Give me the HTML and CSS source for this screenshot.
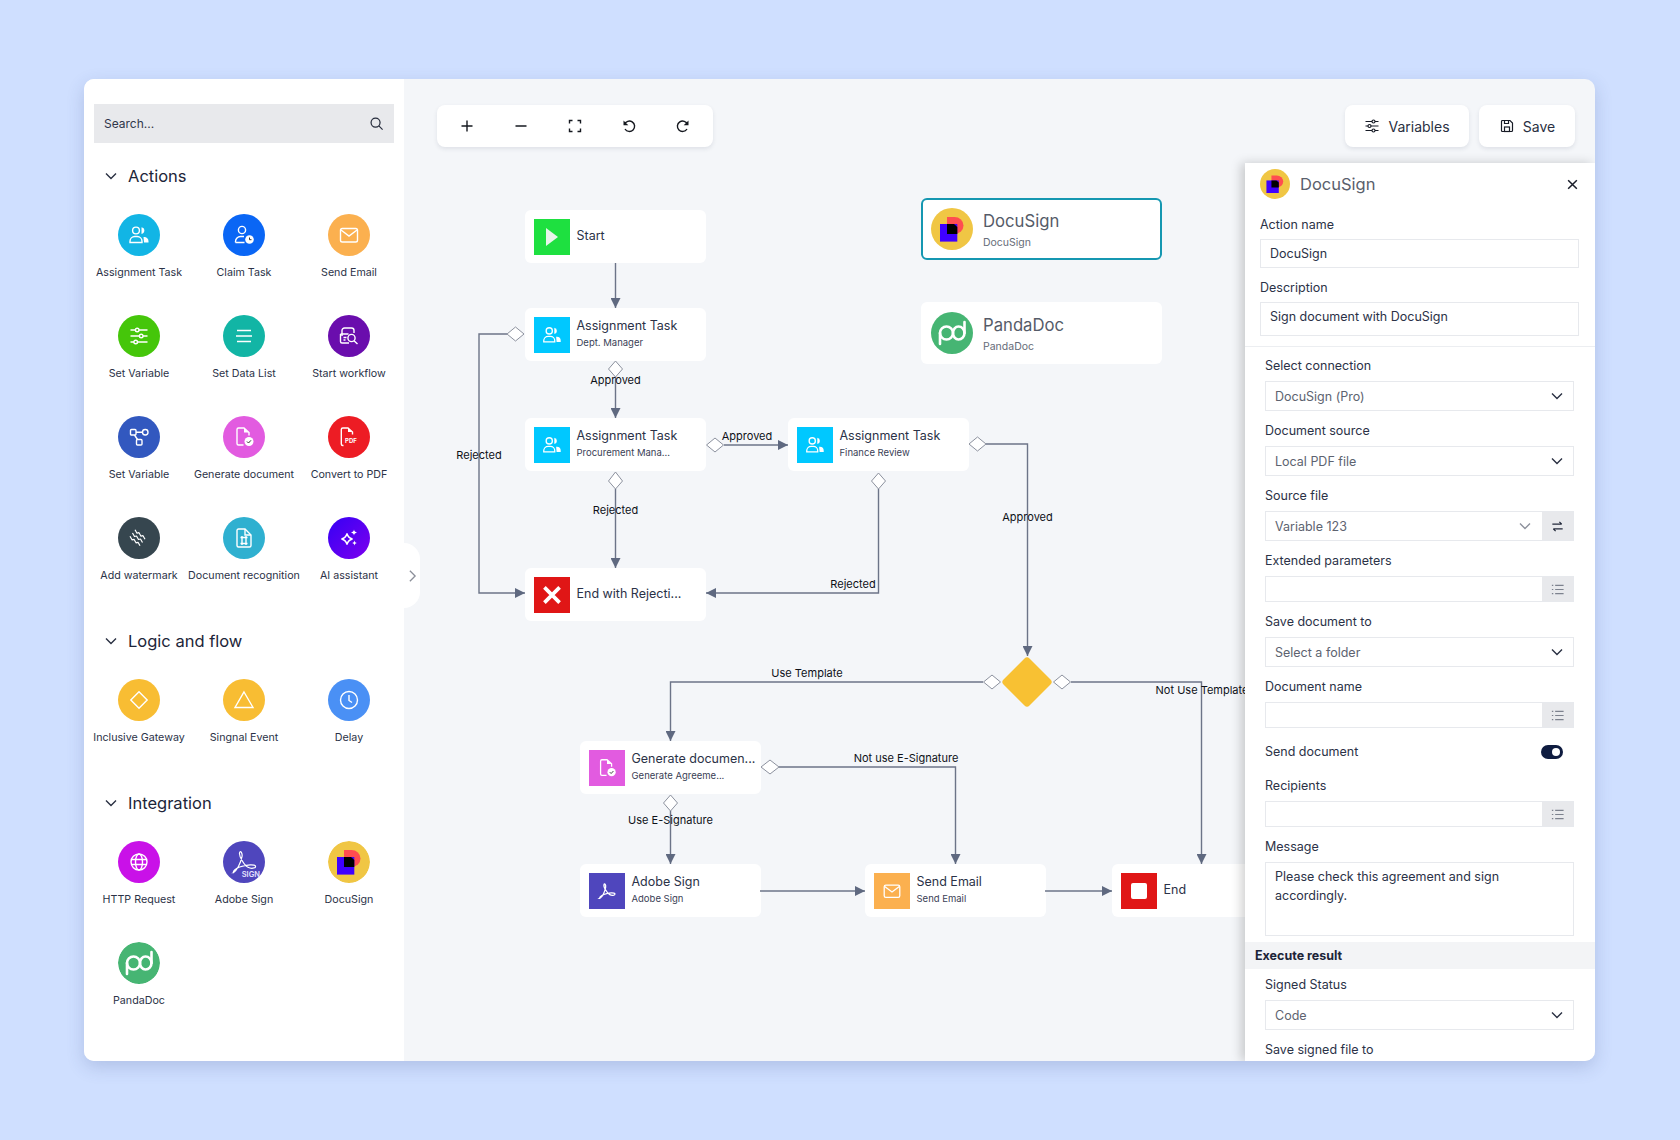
FILE: index.html
```html
<!DOCTYPE html>
<html lang="en">
<head>
    <meta charset="UTF-8">
    <title>Workflow Designer</title>
    <link rel="stylesheet" href="styles.css">
</head>
<body>
    <svg class="sprites" width="0" height="0">
        <symbol id="i-assign" viewBox="0 0 24 24">
            <circle cx="9" cy="7.5" r="3.4"/>
            <path d="M3 19.5v-1.2A4.8 4.8 0 0 1 7.8 13.5h2.4A4.8 4.8 0 0 1 15 18.3v1.2z"/>
            <path class="solid" d="M14.5 4.2a3.4 3.4 0 0 1 0 6.7z"/>
            <path class="solid" d="M16.5 14h.8a4.2 4.2 0 0 1 4.2 4.2v1.3h-4.5z"/>
        </symbol>
        <symbol id="i-claim" viewBox="0 0 24 24">
            <circle cx="10" cy="7" r="3.6"/>
            <path d="M3.5 19.5v-1A5 5 0 0 1 8.5 13.5H12M3.5 19.5h9"/>
            <circle class="solid" cx="17.5" cy="16.5" r="4.3"/>
            <path class="hand" d="M17.5 14.5v2.2h2"/>
        </symbol>
        <symbol id="i-mail" viewBox="0 0 24 24">
            <rect x="3.5" y="5.5" width="17" height="13.5" rx="1.8"/>
            <path d="M4 7l8 6 8-6"/>
        </symbol>
        <symbol id="i-sliders" viewBox="0 0 24 24">
            <path d="M3.5 6h5M12 6h8.5M3.5 12h9M16 12h4.5M3.5 18H7M10.5 18h10"/>
            <circle cx="10.2" cy="6" r="1.8"/>
            <circle cx="14.2" cy="12" r="1.8"/>
            <circle cx="8.7" cy="18" r="1.8"/>
        </symbol>
        <symbol id="i-list" viewBox="0 0 24 24">
            <path d="M5 6.5h14M4 12h16M5 17.5h14"/>
        </symbol>
        <symbol id="i-start" viewBox="0 0 24 24">
            <path d="M5 12V6.5A2.5 2.5 0 0 1 7.5 4h7A2.5 2.5 0 0 1 17 6.5V9"/>
            <path d="M3.5 10h8M3.5 10v7.5A1.5 1.5 0 0 0 5 19h7"/>
            <circle cx="14.5" cy="14" r="3.6"/>
            <path d="M17 16.7l3.5 3.3M6.5 13.5h3M6.5 16h2"/>
        </symbol>
        <symbol id="i-flow" viewBox="0 0 24 24">
            <rect x="3.5" y="4.5" width="5.5" height="5.5" rx="1"/>
            <rect x="15.5" y="4.5" width="5.5" height="5.5" rx="2.7"/>
            <rect x="9.5" y="14.5" width="5.5" height="5.5" rx="1"/>
            <path d="M9 7.2h6.5M7.5 10l3 4.5"/>
        </symbol>
        <symbol id="i-doc-check" viewBox="0 0 24 24">
            <path d="M11.5 20h-5A1.5 1.5 0 0 1 5 18.5v-14A1.5 1.5 0 0 1 6.5 3H12l5 4.5v3"/>
            <path class="solid" d="M12 3v4.5h5z"/>
            <circle class="solid" cx="17" cy="16.5" r="4.5"/>
            <path class="hand" d="M15 16.5l1.5 1.5 2.5-2.7"/>
        </symbol>
        <symbol id="i-pdf" viewBox="0 0 24 24">
            <path d="M6.5 20.5h-.7a1.5 1.5 0 0 1-1.5-1.500V4.500A1.500 1.500 0 0 1 5.800 3H11l4.500 4v2.500"/>
            <path class="solid" d="M11 3v4h4.500z"/>
        </symbol>
        <symbol id="i-watermark" viewBox="0 0 24 24">
            <path d="M8 3.700l2 3.500 2-.5 2 3.500 2-.5 2 3.500"/>
            <path d="M5.500 7l2 3.500 2-.5 2 3.500 2-.5 2 3.500"/>
            <path d="M3 10.300l2 3.500 2-.5 2 3.500 2-.5 2 3.500"/>
        </symbol>
        <symbol id="i-recognize" viewBox="0 0 24 24">
            <path d="M13 3H6.500A1.500 1.500 0 0 0 5 4.500v15A1.500 1.500 0 0 0 6.500 21h11a1.500 1.500 0 0 0 1.500-1.500V9z"/>
            <path d="M13 3v6h6"/>
            <path d="M8.500 11.500h7M8.500 17.500h7M10 10v9M14 10v9"/>
        </symbol>
        <symbol id="i-spark" viewBox="0 0 24 24">
            <path d="M10 7.500c.7 3 2.500 4.800 5.500 5.500-3 .7-4.800 2.500-5.500 5.500-.7-3-2.500-4.800-5.500-5.500 3-.7 4.800-2.500 5.500-5.500z"/>
            <path class="solid" d="M17 3.500c.3 1.700 1.200 2.600 3 3-1.800.4-2.700 1.300-3 3-.3-1.700-1.200-2.600-3-3 1.800-.4 2.700-1.300 3-3z"/>
            <path class="solid" d="M17.500 14.500c.3 1.500 1 2.200 2.500 2.500-1.500.3-2.200 1-2.500 2.500-.3-1.500-1-2.200-2.500-2.500 1.500-.3 2.200-1 2.500-2.500z"/>
        </symbol>
        <symbol id="i-gateway" viewBox="0 0 24 24">
            <path d="M12 3.800l8.200 8.200-8.200 8.200L3.800 12z"/>
        </symbol>
        <symbol id="i-signal" viewBox="0 0 24 24">
            <path d="M12 4l9 15.500H3z"/>
        </symbol>
        <symbol id="i-clock" viewBox="0 0 24 24">
            <circle cx="12" cy="12" r="8.5"/>
            <path d="M12 7v5.500l3 2"/>
        </symbol>
        <symbol id="i-globe" viewBox="0 0 24 24">
            <circle cx="12" cy="12" r="8"/>
            <ellipse cx="12" cy="12" rx="3.5" ry="8"/>
            <path d="M4.500 9.500h15M4.500 14.500h15"/>
        </symbol>
        <symbol id="i-adobe" viewBox="0 0 24 24">
            <path d="M4 20c2.500-1.500 5.500-7 6.500-12 .5-2.700-1.200-5-1.800-3-.7 2.500 3.500 9.500 6.300 11 2.300 1.200 5.700.8 5.700-.7 0-1.800-7-1.500-12 .5-3.500 1.400-5.500 3.500-4.200 4.200z"/>
        </symbol>
        <symbol id="l-docusign" viewBox="0 0 42 42">
            <circle class="logo-bg-yellow" cx="21" cy="21" r="21"/>
            <path class="logo-red" d="M16 9h7.500a9 8.500 0 0 1 0 17H16z"/>
            <rect class="logo-blue" x="9" y="16" width="17.3" height="17.6"/>
            <path class="logo-black" d="M16 16h7l3.300 3v7H16z"/>
        </symbol>
        <symbol id="l-pandadoc" viewBox="0 0 42 42">
            <circle class="logo-bg-green" cx="21" cy="21" r="21"/>
            <path class="logo-pd" d="M9 32V21a6.500 6.500 0 0 1 13 0a5.500 6.500 0 0 0 5.500 6.500a6 6.500 0 0 0 6-6.500V10"/>
            <path class="logo-pd" d="M33.500 21a6 6.500 0 0 0-6-6.500a5.500 6.500 0 0 0-5.500 6.500a6.500 6.500 0 0 1-6.500 6.500a6.500 6.500 0 0 1-6.500-6.500"/>
        </symbol>
        <symbol id="i-chevron" viewBox="0 0 14 14">
            <path d="M2 4.500l5 5 5-5"/>
        </symbol>
    </svg>

    <div class="app">
        <aside class="sidebar">
            <div class="search">
                <span>Search...</span>
                <svg class="search-icon" viewBox="0 0 16 16"><circle cx="7" cy="7" r="4.8"/><path d="M10.500 10.500l4 4"/></svg>
            </div>

            <section class="group">
                <div class="group-head"><svg class="chev"><use href="#i-chevron"/></svg>Actions</div>
                <div class="tiles">
                    <div class="tile"><div class="disc c-assign"><svg class="glyph"><use href="#i-assign"/></svg></div><span>Assignment Task</span></div>
                    <div class="tile"><div class="disc c-claim"><svg class="glyph"><use href="#i-claim"/></svg></div><span>Claim Task</span></div>
                    <div class="tile"><div class="disc c-mail"><svg class="glyph"><use href="#i-mail"/></svg></div><span>Send Email</span></div>
                    <div class="tile"><div class="disc c-var"><svg class="glyph"><use href="#i-sliders"/></svg></div><span>Set Variable</span></div>
                    <div class="tile"><div class="disc c-list"><svg class="glyph"><use href="#i-list"/></svg></div><span>Set Data List</span></div>
                    <div class="tile"><div class="disc c-start"><svg class="glyph"><use href="#i-start"/></svg></div><span>Start workflow</span></div>
                    <div class="tile"><div class="disc c-flow"><svg class="glyph"><use href="#i-flow"/></svg></div><span>Set Variable</span></div>
                    <div class="tile"><div class="disc c-gen"><svg class="glyph"><use href="#i-doc-check"/></svg></div><span>Generate document</span></div>
                    <div class="tile">
                        <div class="disc c-pdf">
                            <svg class="glyph" viewBox="0 0 24 24"><use href="#i-pdf"/><text class="pdf-text" x="8" y="18">PDF</text></svg>
                        </div>
                        <span>Convert to PDF</span>
                    </div>
                    <div class="tile"><div class="disc c-water"><svg class="glyph glyph-thin"><use href="#i-watermark"/></svg></div><span>Add watermark</span></div>
                    <div class="tile"><div class="disc c-rec"><svg class="glyph"><use href="#i-recognize"/></svg></div><span>Document recognition</span></div>
                    <div class="tile"><div class="disc c-ai"><svg class="glyph"><use href="#i-spark"/></svg></div><span>AI assistant</span></div>
                </div>
            </section>

            <section class="group">
                <div class="group-head"><svg class="chev"><use href="#i-chevron"/></svg>Logic and flow</div>
                <div class="tiles">
                    <div class="tile"><div class="disc c-gold"><svg class="glyph"><use href="#i-gateway"/></svg></div><span>Inclusive Gateway</span></div>
                    <div class="tile"><div class="disc c-gold"><svg class="glyph"><use href="#i-signal"/></svg></div><span>Singnal Event</span></div>
                    <div class="tile"><div class="disc c-delay"><svg class="glyph"><use href="#i-clock"/></svg></div><span>Delay</span></div>
                </div>
            </section>

            <section class="group">
                <div class="group-head"><svg class="chev"><use href="#i-chevron"/></svg>Integration</div>
                <div class="tiles">
                    <div class="tile"><div class="disc c-http"><svg class="glyph"><use href="#i-globe"/></svg></div><span>HTTP Request</span></div>
                    <div class="tile">
                        <div class="disc c-adobe">
                            <svg class="glyph glyph-lg"><use href="#i-adobe"/></svg>
                            <span class="sign-mark">SIGN</span>
                        </div>
                        <span>Adobe Sign</span>
                    </div>
                    <div class="tile"><div class="disc"><svg class="logo"><use href="#l-docusign"/></svg></div><span>DocuSign</span></div>
                    <div class="tile"><div class="disc"><svg class="logo"><use href="#l-pandadoc"/></svg></div><span>PandaDoc</span></div>
                </div>
            </section>
        </aside>

        <main class="canvas">
            <button class="collapse"><svg viewBox="0 0 10 16"><path d="M2 2l6 6-6 6"/></svg></button>

            <svg class="edges" viewBox="404 79 1191 982">
                <defs>
                    <marker id="arrow" viewBox="0 0 10 10" refX="10" refY="5" markerWidth="10" markerHeight="10" markerUnits="userSpaceOnUse" orient="auto">
                        <path d="M0 0L10 5L0 10z"/>
                    </marker>
                </defs>
                <g class="wires">
                    <path d="M615.5 263V308" marker-end="url(#arrow)"/>
                    <path d="M507 334H479V593H525" marker-end="url(#arrow)"/>
                    <path d="M615.5 377V418" marker-end="url(#arrow)"/>
                    <path d="M724 445H788" marker-end="url(#arrow)"/>
                    <path d="M615.5 489V568" marker-end="url(#arrow)"/>
                    <path d="M878.5 489V593H706" marker-end="url(#arrow)"/>
                    <path d="M986 444H1027.5V656" marker-end="url(#arrow)"/>
                    <path d="M983 682H670.5V741" marker-end="url(#arrow)"/>
                    <path d="M1071 682H1201.5V864" marker-end="url(#arrow)"/>
                    <path d="M779 767H955.5V864" marker-end="url(#arrow)"/>
                    <path d="M670.5 811V864" marker-end="url(#arrow)"/>
                    <path d="M760 891H865" marker-end="url(#arrow)"/>
                    <path d="M1045 891H1112" marker-end="url(#arrow)"/>
                </g>
                <g class="ports">
                    <polygon points="507,334 515.5,327 524,334 515.5,341"/>
                    <polygon points="615.5,361 622.5,369 615.5,377 608.5,369"/>
                    <polygon points="706.5,445 715,438 723.5,445 715,452"/>
                    <polygon points="615.5,472 622.5,481 615.5,489 608.5,481"/>
                    <polygon points="878.5,473 885.5,481 878.5,489 871.5,481"/>
                    <polygon points="969,444 977.5,437 986,444 977.5,451"/>
                    <polygon points="983.5,682 992,675 1000.5,682 992,689"/>
                    <polygon points="1053.5,682 1062,675 1070.5,682 1062,689"/>
                    <polygon points="761,767 770,760 779,767 770,774"/>
                    <polygon points="670.5,795 677.5,803 670.5,811 663.5,803"/>
                </g>
                <path class="gateway" d="M1024.5 658.5a3.5 3.5 0 0 1 5 0l21 21a3.5 3.5 0 0 1 0 5l-21 21a3.5 3.5 0 0 1-5 0l-21-21a3.5 3.5 0 0 1 0-5z"/>
                <g class="edge-labels">
                    <text x="615.5" y="384">Approved</text>
                    <text x="747" y="440">Approved</text>
                    <text x="479" y="459">Rejected</text>
                    <text x="615.5" y="514">Rejected</text>
                    <text x="853" y="588">Rejected</text>
                    <text x="1027.5" y="521">Approved</text>
                    <text x="807" y="677">Use Template</text>
                    <text x="1202" y="694">Not Use Template</text>
                    <text x="906" y="762">Not use E-Signature</text>
                    <text x="670.5" y="824">Use E-Signature</text>
                </g>
            </svg>

            <div class="node n-start">
                <div class="node-icon c-node-start"><div class="play"></div></div>
                <div class="node-text"><div class="node-title">Start</div></div>
            </div>
            <div class="node n-dept">
                <div class="node-icon c-node-assign"><svg class="node-glyph"><use href="#i-assign"/></svg></div>
                <div class="node-text"><div class="node-title">Assignment Task</div><div class="node-sub">Dept. Manager</div></div>
            </div>
            <div class="node n-proc">
                <div class="node-icon c-node-assign"><svg class="node-glyph"><use href="#i-assign"/></svg></div>
                <div class="node-text"><div class="node-title">Assignment Task</div><div class="node-sub">Procurement Mana...</div></div>
            </div>
            <div class="node n-fin">
                <div class="node-icon c-node-assign"><svg class="node-glyph"><use href="#i-assign"/></svg></div>
                <div class="node-text"><div class="node-title">Assignment Task</div><div class="node-sub">Finance Review</div></div>
            </div>
            <div class="node n-reject">
                <div class="node-icon c-node-end">
                    <svg class="node-glyph node-glyph-x" viewBox="0 0 24 24"><path d="M5 5l14 14M19 5L5 19"/></svg>
                </div>
                <div class="node-text"><div class="node-title">End with Rejecti...</div></div>
            </div>
            <div class="node n-gen">
                <div class="node-icon c-gen"><svg class="node-glyph"><use href="#i-doc-check"/></svg></div>
                <div class="node-text"><div class="node-title">Generate documen...</div><div class="node-sub">Generate Agreeme...</div></div>
            </div>
            <div class="node n-adobe">
                <div class="node-icon c-adobe"><svg class="node-glyph"><use href="#i-adobe"/></svg></div>
                <div class="node-text"><div class="node-title">Adobe Sign</div><div class="node-sub">Adobe Sign</div></div>
            </div>
            <div class="node n-send">
                <div class="node-icon c-mail"><svg class="node-glyph"><use href="#i-mail"/></svg></div>
                <div class="node-text"><div class="node-title">Send Email</div><div class="node-sub">Send Email</div></div>
            </div>
            <div class="node n-end">
                <div class="node-icon c-node-end"><div class="stop"></div></div>
                <div class="node-text"><div class="node-title">End</div></div>
            </div>
            <div class="node node-wide n-docu">
                <svg class="node-logo"><use href="#l-docusign"/></svg>
                <div class="node-text"><div class="node-title">DocuSign</div><div class="node-sub">DocuSign</div></div>
            </div>
            <div class="node node-wide n-panda">
                <svg class="node-logo"><use href="#l-pandadoc"/></svg>
                <div class="node-text"><div class="node-title">PandaDoc</div><div class="node-sub">PandaDoc</div></div>
            </div>

            <div class="toolbar">
                <button><svg viewBox="0 0 16 16"><path d="M8 2.5v11M2.5 8h11"/></svg></button>
                <button><svg viewBox="0 0 16 16"><path d="M2.5 8h11"/></svg></button>
                <button><svg viewBox="0 0 16 16"><path d="M5.5 2.5h-3v3M10.5 2.5h3v3M5.5 13.5h-3v-3M10.5 13.5h3v-3"/></svg></button>
                <button><svg viewBox="0 0 16 16"><path d="M3.5 6.5A5.2 5.2 0 1 1 4 11"/><path class="solid" d="M2.5 2.5v4.8h4.8z"/></svg></button>
                <button><svg viewBox="0 0 16 16"><path d="M12.5 6.5A5.2 5.2 0 1 0 12 11"/><path class="solid" d="M13.5 2.5v4.8H8.7z"/></svg></button>
            </div>
            <div class="actions">
                <button class="action action-vars">
                    <svg viewBox="0 0 16 16"><path d="M1.5 3.5H8M11 3.5h3.5M1.5 8H4M7 8h7.5M1.5 12.5H8M11 12.5h3.5"/><circle cx="9.5" cy="3.5" r="1.5"/><circle cx="5.5" cy="8" r="1.5"/><circle cx="9.5" cy="12.5" r="1.5"/></svg>
                    Variables
                </button>
                <button class="action">
                    <svg viewBox="0 0 16 16"><path d="M2.5 3.5a1 1 0 0 1 1-1H11l2.5 2.5v7.5a1 1 0 0 1-1 1h-9a1 1 0 0 1-1-1z"/><path d="M5.5 2.5v3h4v-3"/><rect x="5.5" y="9" width="5" height="4.5"/></svg>
                    Save
                </button>
            </div>

            <div class="panel">
                <div class="panel-head">
                    <svg class="panel-logo"><use href="#l-docusign"/></svg>
                    <div class="panel-title">DocuSign</div>
                    <svg class="panel-close" viewBox="0 0 12 12"><path d="M2 2l8 8M10 2l-8 8"/></svg>
                </div>
                <div class="panel-top">
                    <label class="field-label">Action name</label>
                    <div class="box box-name">DocuSign</div>
                    <label class="field-label">Description</label>
                    <div class="box box-desc">Sign document with DocuSign</div>
                </div>
                <div class="panel-form">
                    <label class="field-label">Select connection</label>
                    <div class="box box-select">DocuSign (Pro)<svg class="chev"><use href="#i-chevron"/></svg></div>
                    <label class="field-label">Document source</label>
                    <div class="box box-select">Local PDF file<svg class="chev"><use href="#i-chevron"/></svg></div>
                    <label class="field-label">Source file</label>
                    <div class="box box-select box-addon">
                        <span class="addon-main">Variable 123<svg class="chev chev-soft"><use href="#i-chevron"/></svg></span>
                        <span class="addon-btn"><svg viewBox="0 0 16 16"><path d="M2.5 5.5h10M10 3l2.5 2.5M13.5 10.500h-10M6 13l-2.5-2.5"/></svg></span>
                    </div>
                    <label class="field-label">Extended parameters</label>
                    <div class="box box-input box-addon"><span class="addon-main"></span><span class="addon-btn addon-list"><svg viewBox="0 0 16 16"><path d="M5.5 3.5h9M5.5 8h9M5.5 12.5h9M2 3.5h1.5M2 8h1.5M2 12.5h1.5"/></svg></span></div>
                    <label class="field-label">Save document to</label>
                    <div class="box box-select">Select a folder<svg class="chev"><use href="#i-chevron"/></svg></div>
                    <label class="field-label">Document name</label>
                    <div class="box box-input box-addon"><span class="addon-main"></span><span class="addon-btn addon-list"><svg viewBox="0 0 16 16"><path d="M5.5 3.5h9M5.5 8h9M5.5 12.5h9M2 3.5h1.5M2 8h1.5M2 12.5h1.5"/></svg></span></div>
                    <div class="toggle-row">
                        <span class="field-label">Send document</span>
                        <span class="toggle"></span>
                    </div>
                    <label class="field-label">Recipients</label>
                    <div class="box box-input box-addon"><span class="addon-main"></span><span class="addon-btn addon-list"><svg viewBox="0 0 16 16"><path d="M5.5 3.5h9M5.5 8h9M5.5 12.5h9M2 3.5h1.5M2 8h1.5M2 12.5h1.5"/></svg></span></div>
                    <label class="field-label">Message</label>
                    <div class="box box-message">Please check this agreement and sign accordingly.</div>
                </div>
                <div class="panel-band">Execute result</div>
                <div class="panel-form panel-form-tail">
                    <label class="field-label">Signed Status</label>
                    <div class="box box-select">Code<svg class="chev"><use href="#i-chevron"/></svg></div>
                    <label class="field-label">Save signed file to</label>
                </div>
            </div>
        </main>
    </div>
</body>
</html>
```

FILE: styles.css
```css
* {
    margin: 0;
    padding: 0;
    box-sizing: border-box;
    font-family: Inter, "Open Sans", sans-serif;
}

body {
    height: 1140px;
    background: #cfdfff;
    padding: 79px 85px 0 84px;
    overflow: hidden;
}

.sprites {
    position: absolute;
}

.solid {
    fill: currentColor;
    stroke: none;
}

button {
    border: none;
    background: none;
}

.app {
    display: flex;
    height: 982px;
    background: #f4f6f9;
    border-radius: 10px;
    overflow: hidden;
    box-shadow: 0 6px 18px rgba(50, 70, 130, 0.2);
}

/* sidebar */

.sidebar {
    width: 320px;
    flex-shrink: 0;
    background: #fff;
    padding-top: 25px;
}

.search {
    display: flex;
    align-items: center;
    justify-content: space-between;
    height: 39px;
    margin: 0 10px 21px;
    padding: 0 10px;
    background: #e8e9ec;
    font-size: 12px;
    color: #2f364a;
}

.search-icon {
    width: 15px;
    height: 15px;
    fill: none;
    stroke: #252b3b;
    stroke-width: 1.3;
}

.group {
    margin-bottom: 45px;
}

.group-head {
    display: flex;
    align-items: center;
    gap: 10px;
    height: 24px;
    padding-left: 20px;
    margin-bottom: 26px;
    font-size: 16.5px;
    color: #1d2539;
}

.chev {
    width: 14px;
    height: 14px;
    fill: none;
    stroke: #2a3042;
    stroke-width: 1.4;
    flex-shrink: 0;
}

.tiles {
    display: grid;
    grid-template-columns: repeat(3, 105px);
    row-gap: 34px;
    padding: 0 2.5px;
}

.tile {
    display: flex;
    flex-direction: column;
    align-items: center;
    gap: 9px;
    font-size: 10.7px;
    line-height: 16px;
    color: #2b3247;
    white-space: nowrap;
}

.disc {
    position: relative;
    width: 42px;
    height: 42px;
    border-radius: 50%;
    display: flex;
    align-items: center;
    justify-content: center;
    overflow: hidden;
}

.glyph {
    width: 24px;
    height: 24px;
    fill: none;
    stroke: #fff;
    stroke-width: 1.4;
    color: #fff;
}

.glyph-thin {
    stroke-width: 1.2;
    stroke-linejoin: round;
}

.glyph-lg {
    width: 32px;
    height: 32px;
    stroke-width: 0.9;
}

.hand {
    stroke: #333;
    stroke-width: 1;
    fill: none;
}

.pdf-text {
    font-size: 6px;
    font-weight: 700;
    fill: #fff;
    stroke: none;
}

.sign-mark {
    position: absolute;
    right: 5px;
    bottom: 4px;
    font-size: 7.5px;
    line-height: 8px;
    font-weight: 600;
    color: #e5e3ff;
}

.logo {
    width: 42px;
    height: 42px;
}

.logo-bg-yellow { fill: #f0c644; }
.logo-bg-green { fill: #46b573; }
.logo-red { fill: #ff4d50; }
.logo-blue { fill: #3f00ff; }
.logo-black { fill: #000; }
.logo-pd { fill: none; stroke: #fff; stroke-width: 2.6; stroke-linecap: round; }

.c-assign { background: #12b5e5; }
.c-claim { background: #0a66f5; }
.c-mail { background: #fbb04f; }
.c-var { background: #45c60a; }
.c-list { background: #12b5a5; }
.c-start { background: #6a0dad; }
.c-flow { background: #3258bf; }
.c-gen { background: #e25be0; }
.c-pdf { background: #ed1c24; }
.c-water { background: #36464f; }
.c-rec { background: #2fb0d0; }
.c-ai { background: linear-gradient(135deg, #3500f5, #7d00ee); }
.c-gold { background: #f8bd33; }
.c-delay { background: #4a90f5; }
.c-http { background: #c911e8; }
.c-adobe { background: #4f46bd; }
.c-node-start { background: #1ee040; }
.c-node-assign { background: #00c8ff; }
.c-node-end { background: #e01616; }

.c-claim .hand { stroke: #0a66f5; }
.c-gen .hand { stroke: #e25be0; }

/* canvas */

.canvas {
    position: relative;
    flex: 1;
    overflow: hidden;
}

.collapse {
    position: absolute;
    left: 0;
    top: 464px;
    z-index: 3;
    width: 16px;
    height: 65px;
    background: #fff;
    border-radius: 0 16px 16px 0;
    display: flex;
    align-items: center;
    justify-content: center;
}

.collapse svg {
    width: 9px;
    height: 14px;
    fill: none;
    stroke: #8b8f99;
    stroke-width: 1.5;
}

.edges {
    position: absolute;
    left: 0;
    top: 0;
    width: 1191px;
    height: 982px;
    z-index: 2;
}

.wires path {
    fill: none;
    stroke: #6c7488;
    stroke-width: 1.4;
}

#arrow path {
    fill: #5f6980;
    stroke: none;
}

.ports polygon {
    fill: #fff;
    stroke: #8c919e;
    stroke-width: 1;
}

.gateway {
    fill: #f8c133;
}

.edge-labels text {
    font-size: 11px;
    fill: #0e1118;
    text-anchor: middle;
}

.node {
    position: absolute;
    display: flex;
    align-items: center;
    gap: 7px;
    width: 181px;
    height: 53px;
    padding: 0 8.5px;
    background: #fff;
    border-radius: 6px;
    z-index: 1;
}

.node-icon {
    width: 36px;
    height: 36px;
    flex-shrink: 0;
    display: flex;
    align-items: center;
    justify-content: center;
}

.node-glyph {
    width: 22px;
    height: 22px;
    fill: none;
    stroke: #fff;
    stroke-width: 1.4;
    color: #fff;
}

.node-glyph-x {
    width: 26px;
    height: 26px;
    stroke-width: 3.4;
}

.play {
    width: 0;
    height: 0;
    border-left: 12px solid #e8f5ea;
    border-top: 9px solid transparent;
    border-bottom: 9px solid transparent;
}

.stop {
    width: 16px;
    height: 16px;
    background: #fff;
    border-radius: 2px;
}

.node-text {
    margin-bottom: 2px;
}

.node-title {
    font-size: 12.5px;
    line-height: 18px;
    color: #2b3247;
    white-space: nowrap;
}

.node-sub {
    margin-top: 1px;
    font-size: 9.5px;
    line-height: 14px;
    color: #3a4156;
    white-space: nowrap;
}

.node-wide {
    width: 241px;
    height: 62px;
    gap: 10px;
    padding: 0 10px;
}

.node-wide .node-text {
    margin-bottom: 0;
}

.node-logo {
    width: 42px;
    height: 42px;
    flex-shrink: 0;
}

.node-wide .node-title {
    font-size: 16.7px;
    line-height: 24px;
    color: #555b68;
}

.node-wide .node-sub {
    margin-top: 3px;
    font-size: 10.5px;
    color: #666c78;
}

.n-start { left: 121px; top: 131px; }
.n-dept { left: 121px; top: 229px; }
.n-proc { left: 121px; top: 339px; }
.n-fin { left: 384px; top: 339px; }
.n-reject { left: 121px; top: 489px; }
.n-gen { left: 176px; top: 662px; }
.n-adobe { left: 176px; top: 785px; }
.n-send { left: 461px; top: 785px; }
.n-end { left: 708px; top: 785px; }
.n-docu { left: 517px; top: 119px; border: 2px solid #1597b1; padding: 0 8px; }
.n-panda { left: 517px; top: 223px; }

.toolbar,
.actions {
    position: absolute;
    top: 26px;
    z-index: 2;
    display: flex;
    height: 42px;
}

.toolbar {
    left: 33px;
    width: 276px;
    padding: 0 3px;
    background: #fff;
    border-radius: 8px;
    box-shadow: 0 2px 4px rgba(40, 50, 80, 0.1);
}

.toolbar button {
    width: 54px;
    display: flex;
    align-items: center;
    justify-content: center;
    color: #15181f;
}

.toolbar svg {
    width: 16px;
    height: 16px;
    fill: none;
    stroke: #15181f;
    stroke-width: 1.4;
}

.actions {
    right: 20px;
    gap: 10px;
}

.action {
    display: flex;
    align-items: center;
    justify-content: center;
    gap: 8px;
    width: 96px;
    background: #fff;
    border-radius: 8px;
    font-size: 14px;
    color: #2a3042;
    box-shadow: 0 2px 4px rgba(40, 50, 80, 0.1);
}

.action-vars {
    width: 124px;
}

.action svg {
    width: 16px;
    height: 16px;
    fill: none;
    stroke: #171b26;
    stroke-width: 1.2;
}

/* properties panel */

.panel {
    position: absolute;
    top: 84px;
    right: 0;
    bottom: 0;
    width: 350px;
    z-index: 4;
    background: #fff;
    overflow: hidden;
    box-shadow: -4px 0 10px rgba(0, 0, 0, 0.18);
}

.panel-head {
    display: flex;
    align-items: center;
    height: 42px;
    padding: 0 16px 0 15px;
}

.panel-logo {
    width: 30px;
    height: 30px;
    margin-right: 10px;
}

.panel-title {
    flex: 1;
    font-size: 16.5px;
    color: #5a606c;
}

.panel-close {
    width: 13px;
    height: 13px;
    fill: none;
    stroke: #1a1e2a;
    stroke-width: 1.4;
}

.panel-top {
    padding: 12px 16px 10px 15px;
    border-bottom: 1px solid #eceef1;
}

.panel-form {
    padding: 11px 21px 0 20px;
}

.panel-form-tail {
    padding-top: 8px;
}

.field-label {
    display: block;
    font-size: 12.5px;
    line-height: 16px;
    color: #2b3247;
    margin-bottom: 7px;
}

.box {
    display: flex;
    align-items: center;
    border: 1px solid #e7e9ed;
    padding: 0 9px;
    font-size: 12.5px;
    color: #5d6370;
    margin-bottom: 12px;
}

.panel-top .field-label {
    margin-bottom: 6px;
}

.box-name {
    height: 29px;
    color: #2b3247;
}

.box-desc {
    height: 34px;
    color: #2b3247;
    align-items: flex-start;
    padding-top: 6px;
    margin-bottom: 0;
}

.box-select {
    height: 30px;
    justify-content: space-between;
    padding-right: 9px;
}

.box-input {
    height: 26px;
}

.box-addon {
    padding: 0;
}

.addon-main {
    flex: 1;
    display: flex;
    align-items: center;
    justify-content: space-between;
    padding: 0 9px;
}

.chev-soft {
    stroke: #8d919c;
    margin-right: 1px;
}

.addon-btn {
    width: 31px;
    align-self: stretch;
    display: flex;
    align-items: center;
    justify-content: center;
    background: #e8e9ec;
}

.addon-btn svg {
    width: 15px;
    height: 15px;
    fill: none;
    stroke: #22283a;
    stroke-width: 1.3;
}

.addon-list svg {
    stroke: #7d828e;
}

.toggle-row {
    display: flex;
    align-items: center;
    justify-content: space-between;
    height: 16px;
    margin: 16px 11px 18px 0;
}

.toggle-row .field-label {
    margin-bottom: 0;
}

.toggle {
    position: relative;
    width: 22px;
    height: 14px;
    border-radius: 7px;
    background: #0f1c40;
}

.toggle::after {
    content: "";
    position: absolute;
    right: 3px;
    top: 3px;
    width: 8px;
    height: 8px;
    border-radius: 50%;
    background: #fff;
}

.box-message {
    height: 74px;
    align-items: flex-start;
    padding: 4px 9px;
    line-height: 19px;
    color: #2b3247;
    margin-bottom: 6px;
}

.panel-band {
    height: 27px;
    display: flex;
    align-items: center;
    padding-left: 10px;
    background: #f3f4f6;
    font-size: 12.5px;
    font-weight: 700;
    color: #1d2539;
}
```
